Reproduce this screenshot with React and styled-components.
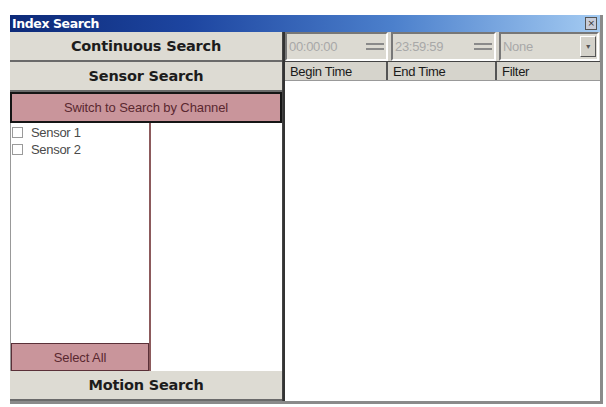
import React from "react";
import styled, { createGlobalStyle } from "styled-components";

const Global = createGlobalStyle`
  html, body { margin: 0; padding: 0; background: #fff; }
  body { font-family: "Liberation Sans", Arial, sans-serif; }
`;

const Page = styled.div`
  padding: 15px 3px 0 10px;
`;

const Window = styled.div`
  width: 593px;
  height: 389px;
  background: #d6d4cc;
  display: flex;
  flex-direction: column;
  box-sizing: border-box;
  border-right: 3px solid #8a8a8a;
  border-bottom: 3px solid #8a8a8a;
`;

const TitleBar = styled.div`
  height: 17px;
  background: linear-gradient(to right, #0d2a78 0%, #1d45a0 30%, #4c80cc 65%, #a4cbf2 100%);
  display: flex;
  align-items: center;
  justify-content: space-between;
  padding: 0 2px 0 2px;
  color: #fff;
  font-family: "DejaVu Sans", Verdana, sans-serif;
  font-weight: bold;
  font-size: 12.5px;
  letter-spacing: -0.4px;
`;

const CloseBox = styled.div`
  width: 10px;
  height: 11px;
  background: #c8ccd8;
  border: 1px solid #555;
  display: flex;
  align-items: center;
  justify-content: center;
  color: #333;
  font-size: 9px;
  font-weight: normal;
  line-height: 1;
  margin-right: 1px;
`;

const Body = styled.div`
  flex: 1;
  display: flex;
  min-height: 0;
`;

const LeftCol = styled.div`
  width: 272px;
  display: flex;
  flex-direction: column;
  border-right: 1px solid #444;
`;

const BigButton = styled.div`
  height: 30px;
  flex: none;
  box-sizing: border-box;
  background: #dddbd3;
  border-bottom: 2px solid #6a6a6a;
  display: flex;
  align-items: center;
  justify-content: center;
  font-family: "DejaVu Sans", Verdana, sans-serif;
  font-weight: bold;
  font-size: 14.5px;
  color: #1c1c1c;
  letter-spacing: -0.2px;
`;

const PinkButton = styled.div`
  height: ${(p) => p.$h}px;
  flex: none;
  box-sizing: border-box;
  background: #c9959b;
  border: ${(p) => p.$bw}px solid ${(p) => p.$bc};
  display: flex;
  align-items: center;
  justify-content: center;
  font-size: 13px;
  color: #5a2830;
  letter-spacing: -0.1px;
`;

const ListArea = styled.div`
  flex: 1;
  display: flex;
  min-height: 0;
  background: #fff;
`;

const SensorCol = styled.div`
  width: 138px;
  display: flex;
  flex-direction: column;
  border-right: 2px solid #8c5a5c;
  border-left: 1px solid #999;
`;

const SensorList = styled.div`
  flex: 1;
  padding: 2px 0 0 1px;
  display: flex;
  flex-direction: column;
  gap: 2px;
`;

const SensorRow = styled.label`
  display: flex;
  align-items: center;
  gap: 8px;
  height: 15px;
  font-size: 13px;
  color: #4a4a4a;
  letter-spacing: -0.3px;
`;

const Check = styled.span`
  width: 11px;
  height: 11px;
  box-sizing: border-box;
  border: 1px solid #9a9a9a;
  background: #fff;
`;

const ChannelCol = styled.div`
  flex: 1;
  background: #fff;
`;

const RightCol = styled.div`
  flex: 1;
  display: flex;
  flex-direction: column;
  border-left: 2px solid #333;
`;

const FieldRow = styled.div`
  height: 29px;
  display: flex;
  gap: 3px;
  padding-right: 1px;
  box-sizing: border-box;
  background: #d6d4cc;
`;

const Field = styled.div`
  width: ${(p) => p.$w}px;
  box-sizing: border-box;
  border: 2px solid;
  border-color: #777 #fff #fff #777;
  background: #dcdad2;
  display: flex;
  align-items: center;
  justify-content: space-between;
  padding-left: 2px;
  font-size: 13px;
  color: #a8a8a8;
  letter-spacing: -0.3px;
  ${(p) => p.$flex && "flex: 1;"}
`;

const Spin = styled.div`
  width: 18px;
  height: 100%;
  display: flex;
  flex-direction: column;
  justify-content: center;
  gap: 3px;
  padding-right: 2px;
  &::before, &::after {
    content: "";
    display: block;
    height: 2px;
    background: #8a8a8a;
  }
`;

const DropBtn = styled.div`
  width: 14px;
  height: 19px;
  background: #d4d2ca;
  border: 1px solid;
  border-color: #fff #555 #555 #fff;
  margin-right: 1px;
  display: flex;
  align-items: center;
  justify-content: center;
  color: #555;
  font-size: 7px;
`;

const HeaderRow = styled.div`
  height: 18px;
  display: flex;
  background: #d6d4cc;
  border-top: 1px solid #444;
  border-bottom: 1px solid #999;
`;

const HeadCell = styled.div`
  width: ${(p) => p.$w}px;
  ${(p) => p.$flex && "flex: 1;"}
  box-sizing: border-box;
  border-right: 2px solid #555;
  padding-left: 5px;
  display: flex;
  align-items: center;
  font-size: 13px;
  color: #1a1a1a;
  letter-spacing: -0.3px;
  &:last-child { border-right: none; }
`;

const Results = styled.div`
  flex: 1;
  background: #fff;
`;

export default function App() {
  return (
    <>
      <Global />
      <Page>
        <Window>
          <TitleBar>
            <span>Index Search</span>
            <CloseBox>×</CloseBox>
          </TitleBar>
          <Body>
            <LeftCol>
              <BigButton>Continuous Search</BigButton>
              <BigButton>Sensor Search</BigButton>
              <PinkButton $h={31} $bw={2} $bc="#151515">Switch to Search by Channel</PinkButton>
              <ListArea>
                <SensorCol>
                  <SensorList>
                    <SensorRow><Check />Sensor 1</SensorRow>
                    <SensorRow><Check />Sensor 2</SensorRow>
                  </SensorList>
                  <PinkButton $h={28} $bw={1} $bc="#5a3038">Select All</PinkButton>
                </SensorCol>
                <ChannelCol />
              </ListArea>
              <BigButton>Motion Search</BigButton>
            </LeftCol>
            <RightCol>
              <FieldRow>
                <Field $w={103}>00:00:00<Spin /></Field>
                <Field $w={105}>23:59:59<Spin /></Field>
                <Field $flex>None<DropBtn>▼</DropBtn></Field>
              </FieldRow>
              <HeaderRow>
                <HeadCell $w={103}>Begin Time</HeadCell>
                <HeadCell $w={109}>End Time</HeadCell>
                <HeadCell $flex>Filter</HeadCell>
              </HeaderRow>
              <Results />
            </RightCol>
          </Body>
        </Window>
      </Page>
    </>
  );
}
